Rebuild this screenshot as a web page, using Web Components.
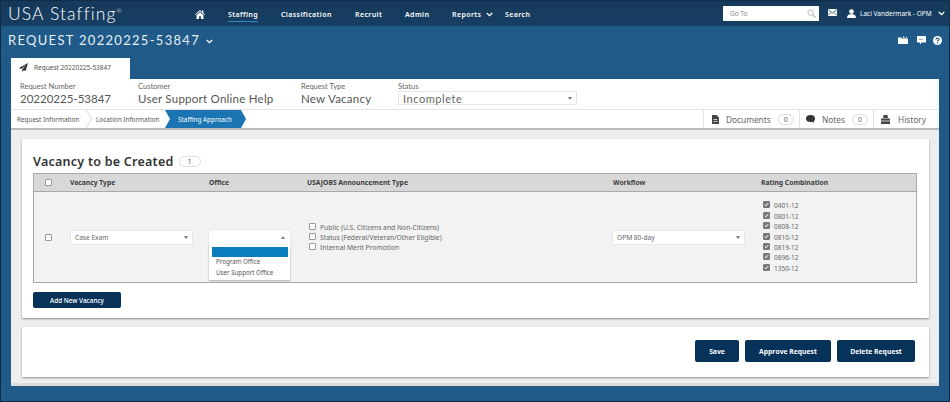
<!DOCTYPE html>
<html lang="en">
<head>
<meta charset="utf-8">
<title>USA Staffing</title>
<style>
  html, body { margin: 0; padding: 0; }
  body { width: 950px; height: 402px; overflow: hidden; font-family: "Open Sans", "Noto Sans", sans-serif; color: #444; }
</style>
</head>
<body>
<usa-shell>
  <usa-topbar></usa-topbar>
  <usa-title></usa-title>
  <usa-request></usa-request>
</usa-shell>

<script>
const ICONS = {
  home: '<svg width="10" height="9" viewBox="0 0 10 9"><path fill="#fff" d="M5 0 0 4.4l.6.6L5 1.3 9.4 5l.6-.6L8.300 3V.6H7V2zM1.500 5.300V9h2.600V6.200h1.800V9h2.600V5.300L5 2.300z"/></svg>',
  chevron: '<svg width="7" height="5" viewBox="0 0 7 5"><path fill="none" stroke="#fff" stroke-width="1.300" d="M.8 1 3.500 3.700 6.200 1"/></svg>',
  search: '<svg width="9" height="9" viewBox="0 0 9 9"><circle cx="3.600" cy="3.600" r="2.700" fill="none" stroke="#bbb" stroke-width="1"/><path stroke="#bbb" stroke-width="1.300" d="m5.600 5.600 3 3"/></svg>',
  mail: '<svg width="9" height="7" viewBox="0 0 9 7"><rect width="9" height="7" rx=".6" fill="#fff"/><path fill="none" stroke="#14395a" stroke-width=".7" d="M.3.8 4.500 4 8.700.8M.3 6.300l2.800-3M8.700 6.300l-2.800-3"/></svg>',
  user: '<svg width="9" height="9" viewBox="0 0 9 9"><circle cx="4.500" cy="2.600" r="2.300" fill="#fff"/><path fill="#fff" d="M0 9c0-2.500 1.500-3.500 3-3.800h3C7.500 5.500 9 6.500 9 9z"/></svg>',
  briefcase: '<svg width="10" height="8" viewBox="0 0 10 8"><path fill="#fff" d="M0 1.500h3l1 1h6V8H0zM5 0l2 1.800L9 .4v1.400H4.800z"/></svg>',
  chat: '<svg width="9" height="9" viewBox="0 0 9 9"><path fill="#fff" d="M.6 0h7.800q.6 0 .6.600v5.300q0 .6-.6.600H4.700L3 8.500V6.500H.6Q0 6.500 0 5.900V.6Q0 0 .6 0z"/><path stroke="#1f5a88" stroke-width="1" stroke-dasharray="1 1" d="M2.500 3.400h4"/></svg>',
  help: '<svg width="9" height="9" viewBox="0 0 9 9"><circle cx="4.500" cy="4.500" r="4.500" fill="#fff"/><path fill="none" stroke="#1f5a88" stroke-width="1.200" d="M3 3.500q0-1.400 1.500-1.400T6 3.400Q6 4.200 4.500 5v.6"/><rect x="3.900" y="6.300" width="1.200" height="1.200" fill="#1f5a88"/></svg>',
  plane: '<svg width="9" height="9" viewBox="0 0 9 9"><path fill="#333" d="M9 0 0 5l2.300 1L7 2 3.200 6.500v2.400l1.500-1.700L6.700 8z"/></svg>',
  doc: '<svg width="7" height="9" viewBox="0 0 7 9"><path fill="#444" d="M0 0h4.500L7 2.500V9H0z"/><path stroke="#fff" stroke-width=".7" d="M1.500 4.500h4M1.500 6.500h4"/></svg>',
  note: '<svg width="9" height="8" viewBox="0 0 9 8"><ellipse cx="4.500" cy="3.500" rx="4.500" ry="3.500" fill="#333"/><path fill="#333" d="m5 6 3 2-.5-3z"/></svg>',
  history: '<svg width="9" height="9" viewBox="0 0 9 9"><path fill="#444" d="M2.500 0h4L7 3H2zM0 3.500h9V9H0z"/><path stroke="#fff" stroke-width=".7" d="M0 6h9"/></svg>'
};

class UsaShell extends HTMLElement {
  constructor() {
    super();
    this.attachShadow({ mode: 'open' });
    this.shadowRoot.innerHTML = `
      <style>
        :host {
          display: flex; flex-direction: column;
          box-sizing: border-box; width: 950px; height: 402px;
          background: #1f5a88; border: 1px solid #0f2d47; overflow: hidden;
        }
      </style>
      <slot></slot>`;
  }
}

class UsaTopbar extends HTMLElement {
  constructor() {
    super();
    this.attachShadow({ mode: 'open' });
    this.shadowRoot.innerHTML = `
      <style>
        :host {
          display: flex; align-items: center; flex: none; height: 25px;
          background: linear-gradient(#15395a, #173f63); color: #fff;
          font: 600 7px "Noto Sans", sans-serif; letter-spacing: .4px;
        }
        .logo { flex: none; width: 193px; padding-left: 7px; box-sizing: border-box; font: 300 17.500px Lato, sans-serif; letter-spacing: 1.100px; white-space: nowrap; }
        .logo sup { font-size: 6px; vertical-align: 7px; line-height: 0; letter-spacing: 0; }
        nav { display: flex; flex: none; align-items: center; width: 529px; }
        nav a { display: flex; align-items: center; gap: 5px; height: 25px; box-sizing: border-box; padding-top: 1px; white-space: nowrap; }
        nav a.on span { border-bottom: 1px solid #2d8ac5; padding-bottom: 2px; margin-top: 3px; }
        .home { width: 34px; padding-left: 1px; }
        .goto {
          display: flex; flex: none; align-items: center; justify-content: space-between;
          width: 96px; height: 15px; box-sizing: border-box; padding: 0 3px 0 7px; background: #fff;
          color: #888; font-weight: 400; font-size: 6.500px; letter-spacing: 0;
        }
        .mail { display: flex; flex: none; margin-left: 9px; width: 19px; margin-top: -3px; }
        .user { display: flex; align-items: center; gap: 4px; font-weight: 400; font-size: 6.500px; letter-spacing: 0; white-space: nowrap; }
        .user i { display: flex; margin-left: 2px; }
      </style>
      <div class="logo">USA Staffing<sup>®</sup></div>
      <nav>
        <a class="home">${ICONS.home}</a>
        <a class="on" style="width:53px"><span>Staffing</span></a>
        <a style="width:74px">Classification</a>
        <a style="width:50px">Recruit</a>
        <a style="width:47px">Admin</a>
        <a style="width:53px">Reports ${ICONS.chevron}</a>
        <a>Search</a>
      </nav>
      <div class="goto">Go To ${ICONS.search}</div>
      <div class="mail">${ICONS.mail}</div>
      <div class="user">${ICONS.user}<span>Laci Vandermark - OPM</span><i>${ICONS.chevron}</i></div>`;
  }
}

class UsaTitle extends HTMLElement {
  constructor() {
    super();
    this.attachShadow({ mode: 'open' });
    this.shadowRoot.innerHTML = `
      <style>
        :host {
          display: flex; align-items: center; flex: none; height: 32px; box-sizing: border-box;
          padding: 0 7px 4px 7px; color: #e6eef5;
          font: 400 13px Lato, sans-serif; letter-spacing: 1.300px; white-space: nowrap;
        }
        i { display: flex; margin-left: 6px; margin-top: 3px; }
        .tools { display: flex; align-items: center; gap: 7px; margin-left: auto; }
        .tools span { display: flex; }
        .tools span:first-child { margin-right: 2px; }
      </style>
      <span>REQUEST 20220225-53847</span><i>${ICONS.chevron}</i>
      <div class="tools"><span>${ICONS.briefcase}</span><span>${ICONS.chat}</span><span>${ICONS.help}</span></div>`;
  }
}

class FakeSelect extends HTMLElement {
  constructor() {
    super();
    this.attachShadow({ mode: 'open' });
    this.shadowRoot.innerHTML = `
      <style>
        :host {
          display: flex; align-items: center; justify-content: space-between;
          box-sizing: border-box; height: 15px; padding: 0 4px 0 4px;
          background: #fff; border: 1px solid #e6e6e6; color: #666;
          font: 400 6.600px "Noto Sans", sans-serif; white-space: nowrap;
        }
        :host([big]) { font: 400 11px "Lato", sans-serif; letter-spacing: .55px; color: #666; height: 14px; }
        b { width: 0; height: 0; border: 2px solid transparent; border-top: 3px solid #777; border-bottom: 0; }
        :host([open]) { border-color: #fff; box-shadow: 0 0 1px rgba(0,0,0,.2); }
        :host([open]) b { border-top: 0; border-bottom: 3px solid #777; }
      </style>
      <span><slot></slot></span><b></b>`;
  }
}

class CheckRow extends HTMLElement {
  constructor() {
    super();
    this.attachShadow({ mode: 'open' });
    this.shadowRoot.innerHTML = `
      <style>
        :host { display: flex; align-items: center; gap: 4px; height: 10.450px; color: #666; font: 400 6.750px "Noto Sans", sans-serif; white-space: nowrap; }
        :host([checked]) { font-size: 6.500px; }
        .box { flex: none; width: 7px; height: 7px; box-sizing: border-box; margin-top: -2px; border: 1px solid #999; border-radius: 1px; background: #fff; display: flex; }
        :host([checked]) .box { background: #777; border-color: #777; }
        svg { display: none; }
        :host([checked]) svg { display: block; }
      </style>
      <span class="box"><svg width="5" height="5" viewBox="0 0 5 5"><path fill="none" stroke="#fff" stroke-width="1" d="m.7 2.500 1.300 1.300L4.300 1"/></svg></span>
      <span><slot></slot></span>`;
  }
}

class ActionButton extends HTMLElement {
  constructor() {
    super();
    this.attachShadow({ mode: 'open' });
    this.shadowRoot.innerHTML = `
      <style>
        :host {
          display: flex; align-items: center; justify-content: center; box-sizing: border-box;
          background: #07325a; border-radius: 2px; color: #fff; height: 22px;
          font: 700 6.800px "Open Sans", sans-serif; white-space: nowrap;
        }
      </style>
      <slot></slot>`;
  }
}

class VacancyTable extends HTMLElement {
  constructor() {
    super();
    this.attachShadow({ mode: 'open' });
    const ratings = ['0401-12','0801-12','0808-12','0810-12','0819-12','0896-12','1350-12'];
    this.shadowRoot.innerHTML = `
      <style>
        :host { display: block; box-sizing: border-box; height: 110px; border: 1px solid #a9a9a9; background: #f2f2f2; font-family: "Noto Sans", sans-serif; }
        .row { display: grid; grid-template-columns: 36px 139px 98px 306px 148px 1fr; }
        .head { height: 18px; align-items: center; background: #d8d8d8; border-bottom: 1px solid #a9a9a9; box-sizing: border-box; color: #3d3d3d; font-size: 6.750px; font-weight: 700; white-space: nowrap; }
        .body { height: 90px; align-items: center; }
        .cb { width: 7px; height: 7px; box-sizing: border-box; margin-left: 11px; border: 1px solid #999; border-radius: 1px; background: #fff; }
        fake-select.type { width: 123px; }
        fake-select.flow { width: 133px; margin-left: -1px; }
        .office { position: relative; width: 81px; }
        .menu {
          position: absolute; left: 0; top: 15px; width: 81px; height: 35px; box-sizing: border-box;
          padding: 2px 2px 0 3px; background: #fff; box-shadow: 0 1px 2px rgba(0,0,0,.3);
          color: #555; font-size: 6.200px; white-space: nowrap; z-index: 2;
        }
        .menu .sel { height: 10px; background: #0a7dbd; margin-bottom: -1px; }
        .menu div:not(.sel) { height: 11px; line-height: 11px; padding-left: 4px; }
        .opts { margin-left: 2px; padding-top: 1px; }
        .rates { margin-left: 2px; }
      </style>
      <div class="row head">
        <span class="cb" style="margin-top:0"></span><span>Vacancy Type</span><span>Office</span>
        <span>USAJOBS Announcement Type</span><span>Workflow</span><span>Rating Combination</span>
      </div>
      <div class="row body">
        <span class="cb"></span>
        <fake-select class="type">Case Exam</fake-select>
        <div class="office">
          <fake-select open>&nbsp;</fake-select>
          <div class="menu"><div class="sel"></div><div>Program Office</div><div>User Support Office</div></div>
        </div>
        <div class="opts">
          <check-row>Public (U.S. Citizens and Non-Citizens)</check-row>
          <check-row>Status (Federal/Veteran/Other Eligible)</check-row>
          <check-row>Internal Merit Promotion</check-row>
        </div>
        <fake-select class="flow">OPM 80-day</fake-select>
        <div class="rates">${ratings.map(r => `<check-row checked>${r}</check-row>`).join('')}</div>
      </div>`;
  }
}

class UsaRequest extends HTMLElement {
  constructor() {
    super();
    this.attachShadow({ mode: 'open' });
    this.shadowRoot.innerHTML = `
      <style>
        :host { display: block; margin: 0 10px 0 10px; font-family: "Noto Sans", sans-serif; color: #555; }
        .tab {
          display: flex; align-items: center; gap: 6px; width: 119px; height: 21px; box-sizing: border-box;
          padding: 0 0 2px 8px; background: #fff; font-size: 6.500px; color: #555; white-space: nowrap;
        }
        .panel { background: #eee; height: 307px; border-bottom: 3px solid #ddd; box-sizing: border-box; }
        .summary { display: grid; grid-template-columns: 118px 163px 97px 1fr; height: 31px; padding-left: 9px; background: #fff; border-bottom: 1px solid #e3e3e3; box-sizing: border-box; font-family: Lato, sans-serif; }
        .summary label { display: block; margin-top: 3px; font-size: 7.500px; line-height: 9px; color: #666; }
        .summary strong { display: block; margin-top: 1px; font-weight: 400; font-size: 11.500px; line-height: 14px; letter-spacing: .25px; color: #555; }
        .summary strong.num { letter-spacing: 0; }
        .summary fake-select { width: 179px; margin-top: 0; }
        .steps { display: flex; align-items: stretch; height: 20px; box-sizing: border-box; background: #fff; border-bottom: 2px solid #bcbcbc; font-size: 6.400px; color: #555; white-space: nowrap; }
        .step { display: flex; flex: none; align-items: center; position: relative; box-sizing: border-box; }
        .step svg.sep { position: absolute; top: 0; }
        .active { margin-left: 5px; width: 81px; height: 18px; background: #1b75b3; color: #fff; padding-left: 13px; clip-path: polygon(0 0, 76px 0, 81px 50%, 76px 100%, 0 100%, 5px 50%); }
        .side { display: flex; margin-left: auto; font-size: 8.300px; color: #666; }
        .side div { display: flex; align-items: center; border-left: 1px solid #e3e3e3; box-sizing: border-box; padding-left: 8px; }
        .side em { font-style: normal; font-size: 7px; border: 1px solid #ddd; border-radius: 6px; padding: 0 5px; margin-left: 7px; line-height: 9px; }
        .content { padding: 9px 10px 0 11px; }
        .card { background: #fff; box-shadow: 0 1px 2px rgba(0,0,0,.4); box-sizing: border-box; }
        .vac { height: 179px; padding: 11px 12px 0 11px; }
        h2 { display: flex; align-items: center; gap: 5px; margin: 0; height: 23px; font-size: 12.500px; font-weight: 600; color: #333; letter-spacing: .25px; }
        h2 em { font-style: normal; font-weight: 400; font-size: 7.300px; line-height: 9px; padding: 0 8px; border: 1px solid #ddd; border-radius: 6px; color: #555; letter-spacing: 0; }
        action-button.add { width: 88px; height: 16px; margin-top: 9px; font-size: 6.300px; font-weight: 600; }
        .acts { display: flex; justify-content: flex-end; gap: 6px; align-items: center; height: 50px; margin-top: 9px; padding: 0 14px 2px 0; }
      </style>
      <div class="tab">${ICONS.plane}<span>Request 20220225-53847</span></div>
      <div class="panel">
        <div class="summary">
          <div><label>Request Number</label><strong class="num">20220225-53847</strong></div>
          <div><label>Customer</label><strong>User Support Online Help</strong></div>
          <div><label>Request Type</label><strong>New Vacancy</strong></div>
          <div><label>Status</label><fake-select big>Incomplete</fake-select></div>
        </div>
        <div class="steps">
          <div class="step" style="width:79px;padding-left:6px">Request Information
            <svg class="sep" style="left:74px" width="8" height="18" viewBox="0 0 8 18"><path fill="none" stroke="#d8d8d8" d="M1 0l6 9-6 9"/></svg>
          </div>
          <div class="step" style="padding-left:6px;width:70px">Location Information</div>
          <div class="step active">Staffing Approach</div>
          <div class="side">
            <div style="width:96px">${ICONS.doc}<span style="margin-left:7px">Documents</span><em>0</em></div>
            <div style="width:74px;padding-left:6px">${ICONS.note}<span style="margin-left:7px">Notes</span><em>0</em></div>
            <div style="width:66px;padding-left:7px">${ICONS.history}<span style="margin-left:8px">History</span></div>
          </div>
        </div>
        <div class="content">
          <div class="card vac">
            <h2>Vacancy to be Created <em>1</em></h2>
            <vacancy-table></vacancy-table>
            <action-button class="add">Add New Vacancy</action-button>
          </div>
          <div class="card acts">
            <action-button style="width:44px">Save</action-button>
            <action-button style="width:86px">Approve Request</action-button>
            <action-button style="width:78px">Delete Request</action-button>
          </div>
        </div>
      </div>`;
  }
}

customElements.define('usa-shell', UsaShell);
customElements.define('usa-topbar', UsaTopbar);
customElements.define('usa-title', UsaTitle);
customElements.define('fake-select', FakeSelect);
customElements.define('check-row', CheckRow);
customElements.define('action-button', ActionButton);
customElements.define('vacancy-table', VacancyTable);
customElements.define('usa-request', UsaRequest);
</script>
</body>
</html>
